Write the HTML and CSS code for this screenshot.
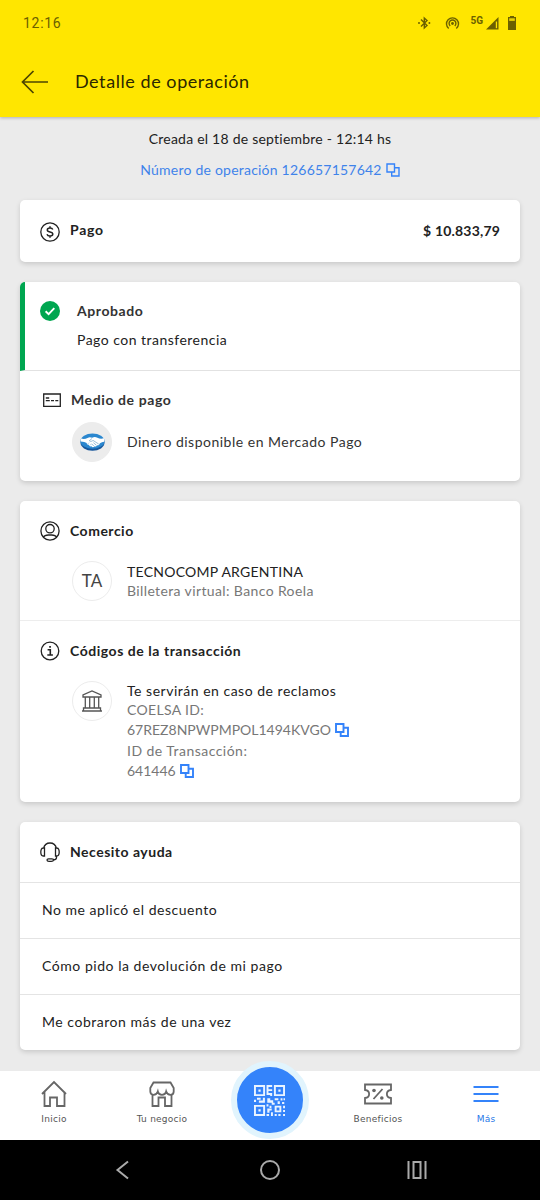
FILE: index.html
```html
<!DOCTYPE html>
<html lang="es">
<head>
<meta charset="utf-8">
<title>Detalle de operación</title>
<link rel="stylesheet" href="styles.css">
</head>
<body>
<svg class="defs" width="0" height="0">
  <symbol id="copy" viewBox="0 0 14 14"><path d="M1 1h7.500v8H1zM8.500 4.800H13V13H5.700V9"/></symbol>
</svg>
<header class="top">
  <div class="status">
    <span class="clock">12:16</span>
    <svg class="status-icons" width="104" height="20" viewBox="0 0 104 20">
      <g fill="none" stroke="#6b6000" stroke-width="1.400">
        <path d="M5 6.500l6 6L8.300 15V5L11 7.500l-6 6"/>
        <path d="M32.700 15.500a6 6 0 1 1 7.600 0M34.200 12.900a3.400 3.400 0 1 1 4.600 0"/>
      </g>
      <g fill="#6b6000">
        <circle cx="3" cy="10" r="1"/><circle cx="13.400" cy="10" r="1"/><circle cx="36.500" cy="10.500" r="1.400"/>
        <path d="M70 16.500L82.500 4v12.500z"/><path d="M79.800 8.500h1.300v6.700h-1.300z" fill="#ffe600"/>
        <path d="M92 4h2V3h4v1h2v13h-8z"/><path d="M93.200 5.300h5.600v2.600h-5.600z" fill="#ffe600" opacity=".85"/>
      </g>
      <text x="54.500" y="10.500" class="net">5G</text>
    </svg>
  </div>
  <div class="appbar">
    <svg width="28" height="24" viewBox="0 0 28 24" class="back"><path d="M27 12H2M12.500 1L1.500 12l11 11"/></svg>
    <h1>Detalle de operación</h1>
  </div>
</header>
<main>
  <p class="created">Creada el 18 de septiembre - 12:14 hs</p>
  <p class="number"><span>Número de operación 126657157642</span><svg class="copy thin"><use href="#copy"/></svg></p>

  <section class="card payment">
    <svg class="ico" viewBox="0 0 20 20"><circle cx="10" cy="10" r="9.200"/><path d="M12.800 7.500c-.4-1-1.400-1.500-2.800-1.500-1.600 0-2.700.7-2.700 1.900 0 2.700 5.500 1.300 5.500 4.100 0 1.300-1.100 2-2.800 2-1.600 0-2.700-.7-3-1.800M10 4.200V6M10 14v1.800" stroke-width="1.500"/></svg>
    <h2 class="pago">Pago</h2>
    <strong class="amount">$ 10.833,79</strong>
  </section>

  <section class="card">
    <div class="approved">
      <svg width="20" height="20" viewBox="0 0 20 20"><circle cx="10" cy="10" r="10" fill="#00a650"/><path d="M5.600 10.300l3 2.900 5.700-6" fill="none" stroke="#fff" stroke-width="1.900"/></svg>
      <div class="approved-text"><h2 class="aprobado">Aprobado</h2><p class="transfer">Pago con transferencia</p></div>
    </div>
    <div class="method">
      <div class="heading"><svg class="ico card-ico" viewBox="0 0 20 20"><path d="M1.700 4h16.600v12.300H1.700z"/><path d="M3.800 8h3.400M3.800 10.600h4M9 10.600h3M13.300 10.600h3" /></svg><h2 class="medio">Medio de pago</h2></div>
      <div class="item">
        <span class="avatar gray"><svg width="25" height="18" viewBox="0 0 25 18">
          <ellipse cx="12.500" cy="9.800" rx="12" ry="7.900" fill="#17569b"/><ellipse cx="12.500" cy="8.200" rx="12" ry="7.600" fill="#2b87cf"/>
          <path d="M1 5.500c2.500.8 4.500.5 6.500-.6 1.700-.9 3-.8 4.700-.1 1.800-1 3.300-1 5.200 0 2.100 1 4 1.200 6.600.5l.2 3.500c-2 .2-3.600 1-4.600 1.900-.3 1.500-1.500 1.900-2.500 1.600-.5 1.200-1.700 1.500-2.700 1.100-.9 1-2.200 1-3-.1-1.600.5-2.400-.5-2.700-1.500-1.400.2-2.100-.8-2-1.700C5.400 9.500 3.300 8.800.7 8.600z" fill="#fff"/>
          <path d="M12 5.500L9.300 7.700c1 1.100 2.700.7 3.700-.3l5.700 3.600M11.500 10.700l2.600 2.600M13.400 9.700l3 2.500M8 10.700l1-1M10 12.300l1-1" fill="none" stroke="#5792bd" stroke-width=".6"/>
        </svg></span>
        <p class="dinero">Dinero disponible en Mercado Pago</p>
      </div>
    </div>
  </section>

  <section class="card">
    <div class="merchant">
      <div class="heading"><svg class="ico" viewBox="0 0 20 20"><circle cx="10" cy="10" r="9.100"/><circle cx="10" cy="7.700" r="4.200"/><path d="M3.300 16.200c1.200-2 2.700-2.200 5-2.200h3.400c2.300 0 3.800.2 5 2.200"/></svg><h2 class="comercio">Comercio</h2></div>
      <div class="item"><span class="avatar">TA</span><div><p class="tecno">TECNOCOMP ARGENTINA</p><p class="sub billetera">Billetera virtual: Banco Roela</p></div></div>
    </div>
    <div class="codes">
      <div class="heading"><svg class="ico" viewBox="0 0 20 20"><circle cx="10" cy="10" r="8.800"/><path d="M7.600 8.700h2.700v5M7.300 14h5.600M9.200 5.900h1.700" stroke-width="1.600"/></svg><h2 class="codigos">Códigos de la transacción</h2></div>
      <div class="item top-item"><span class="avatar"><svg width="22" height="22" viewBox="0 0 22 22" class="bank"><path d="M2 7V5L11 1l9 4v2zM4.300 7v11M8.700 7v11M13.300 7v11M17.700 7v11M2.500 18h17v2.800h-17zM1 21h20"/></svg></span>
        <div><p class="serviran">Te servirán en caso de reclamos</p>
        <p class="sub coelsa">COELSA ID:</p>
        <p class="sub row"><span class="code">67REZ8NPWPMPOL1494KVGO</span><svg class="copy"><use href="#copy"/></svg></p>
        <p class="sub idt">ID de Transacción:</p>
        <p class="sub row"><span class="num">641446</span><svg class="copy"><use href="#copy"/></svg></p></div>
      </div>
    </div>
  </section>

  <section class="card help">
    <div class="heading"><svg class="ico" viewBox="0 0 20 20"><path d="M3.500 6.500C4.500 2.500 6.700 1 10 1s5.500 1.500 6.500 5.500M4.500 6v8H3.300C1.700 14 .8 12.500.8 10s.9-4 2.500-4zM15.500 6v8h1.200c1.600 0 2.500-1.500 2.500-4s-.9-4-2.500-4zM16.500 14v1.500c0 1.500-1.200 2.300-3 2.500M8.500 16.800h3.300c1.500 0 2 .6 1.800 1.300-.2.800-1 1.200-2.300 1.200H9c-1.400 0-2-.5-2-1.200s.5-1.300 1.500-1.300z"/></svg><h2 class="necesito">Necesito ayuda</h2></div>
    <p class="link l1">No me aplicó el descuento</p>
    <p class="link l2">Cómo pido la devolución de mi pago</p>
    <p class="link l3">Me cobraron más de una vez</p>
  </section>
</main>
<nav class="tabs">
  <a class="tab"><svg width="28" height="28" viewBox="0 0 28 28"><path d="M2 14L14 2l12 12M4.500 11.800V26H10v-8.500h7V26h7.500V11.800"/></svg><span>Inicio</span></a>
  <a class="tab"><svg width="28" height="28" viewBox="0 0 28 28"><path d="M5.500 2.500h17L25.700 8v3.500c0 4.500-6 4.500-7.500 0-1 4.500-7.400 4.500-8.400 0-1.500 4.500-7.500 4.500-7.500 0V8zM4.500 14.500V26h6v-8.500h6.500V26h6.500V14.500"/></svg><span>Tu negocio</span></a>
  <div class="scan"><span class="scan-btn"><svg width="31" height="31" viewBox="0 0 21 21" fill="#eaf4ff">
    <path fill-rule="evenodd" d="M0 0h7.500v7.500H0zM1.300 1.300v4.900h4.900V1.300zM13.500 0H21v7.500h-7.500zM14.800 1.300v4.900h4.900V1.300zM0 13.500h7.500V21H0zM1.300 14.800v4.900h4.900v-4.900zM14 14h4.500v4.500H14zM15.300 15.300v1.900h1.900v-1.900z"/>
    <path d="M3 3h1.500v1.500H3zM16.500 3H18v1.500h-1.500zM3 16.500h1.500V18H3zM8.500 0h3.800v1.300H9.800v1.500h2.500v1.300H9.800v1.400h2.500v2H11V6.800H8.500zM0 10h1.400v1.500H0zM2 8.700h2.500V10H2zM3.300 10.500H6V8.700h1.400V12H3.300zM9 9h2v1.300h2V12H9zM14 9h2.500v1.300H14zM18 9h1.300v1.500H18zM20 9h1v1.300h-1zM12 12h2v1.300h-2zM16 11h1.500v1.800H16zM19 11.500h1.500v1.300H19zM8.500 13h1.300v1.500H8.500zM10.500 14h1.300v1.500h-1.300zM9 16h3v1.300h-1.500v1.500H9zM11.500 18.500h1.300V21h-1.300zM8.500 19.700h1.700V21H8.500zM19.700 14H21v1.800h-1.300zM19.700 17H21v1.300h-1.300zM14 19.700h1.400V21H14zM16.500 19.700H18V21h-1.500zM19.700 19.700H21V21h-1.300z"/>
  </svg></span></div>
  <a class="tab"><svg width="30" height="28" viewBox="0 0 30 28"><path d="M2 4.500h26V10c-5.500.5-5.500 7.500 0 8v5.500H2V18c5.500-.5 5.500-7.500 0-8zM10.500 19l9-10"/><circle cx="11" cy="10.500" r="1.800" fill="#666" stroke="none"/><circle cx="18.800" cy="18" r="1.800" fill="#666" stroke="none"/></svg><span>Beneficios</span></a>
  <a class="tab active"><svg width="26" height="28" viewBox="0 0 26 28"><path d="M.5 7h25M.5 14h25M.5 21h25"/></svg><span>Más</span></a>
</nav>
<footer class="android">
  <svg width="20" height="20" viewBox="0 0 20 20"><path d="M15 1.500L4.500 10 15 18.500" /></svg>
  <svg width="20" height="20" viewBox="0 0 20 20"><circle cx="10" cy="10" r="9"/></svg>
  <svg width="20" height="20" viewBox="0 0 20 20"><path d="M1.500 1v18M6.500 2h7v16h-7zM18.500 1v18"/></svg>
</footer>
</body>
</html>
```
FILE: styles.css
```css
* { box-sizing: border-box; margin: 0; padding: 0; }
body { width: 540px; height: 1200px; overflow: hidden; display: flex; flex-direction: column; background: #ebebeb; color: #222; font: 14px/20px Lato, "Open Sans", sans-serif; letter-spacing: .3px; white-space: nowrap; }
h2 { font-size: 14px; line-height: 20px; font-weight: 700; }
svg { flex: none; display: block; }
.defs { position: absolute; }
.top { height: 117px; background: #ffe600; box-shadow: 0 1px 3px rgba(0,0,0,.25); }
.status { height: 46px; padding: 0 20px 0 23px; display: flex; align-items: center; justify-content: space-between; color: #6b6000; }
.clock { font: 400 14px Roboto, sans-serif; letter-spacing: .7px; }
.status-icons { overflow: visible; }
.net { font: 700 10px Roboto, sans-serif; fill: #6b6000; letter-spacing: 0; }
.appbar { height: 71px; padding: 0 0 2px 21px; display: flex; align-items: center; gap: 26px; }
.back { fill: none; stroke: #4d4500; stroke-width: 1.7; margin-top: 2px; }
h1 { font-size: 18px; line-height: 24px; font-weight: 400; color: #2b2700; letter-spacing: .56px; }
main { height: 954px; padding: 12px 20px 0; }
.created { text-align: center; letter-spacing: .23px; }
.number { display: flex; justify-content: center; gap: 4px; align-items: center; height: 20px; margin: 11px 0 20px; color: #3f83ea; letter-spacing: .22px; }
.copy { width: 14px; height: 14px; fill: none; stroke: #3483fa; stroke-width: 1.9; }
.thin { stroke-width: 1.4; }
.card { background: #fff; border-radius: 5px; box-shadow: 0 2px 5px rgba(0,0,0,.15); margin-bottom: 20px; overflow: hidden; }
.ico { width: 20px; height: 20px; fill: none; stroke: #222; stroke-width: 1.3; }
.payment { height: 62px; display: flex; align-items: center; padding: 0 20px; gap: 10px; }
.payment .ico { margin-top: 1px; }
.pago { margin-top: -3px; letter-spacing: .7px; }
.amount { margin-left: auto; letter-spacing: .18px; }
.approved { height: 89px; display: flex; gap: 17px; padding: 19px 15px; border-left: 5px solid #00a650; border-bottom: 1px solid #e2e2e2; }
.approved h2 { color: #333; letter-spacing: .57px; }
.transfer { margin-top: 9px; letter-spacing: .48px; }
.method { height: 110px; padding: 20px; }
.heading { display: flex; align-items: center; gap: 10px; height: 20px; }
.method .heading { padding-left: 2px; gap: 9px; margin-top: -1px; }
.card-ico { margin-left: -.5px; margin-right: .5px; }
.medio { letter-spacing: .6px; color: #333; }
.item { display: flex; align-items: center; gap: 15px; padding-left: 32px; }
.method .item { margin-top: 12px; }
.dinero { letter-spacing: .5px; color: #333; margin-top: -2px; }
.avatar { flex: none; width: 40px; height: 40px; border: 1px solid #ececec; border-radius: 50%; display: flex; align-items: center; justify-content: center; color: #444; font-size: 17px; letter-spacing: 0; }
.gray { background: #ececec; }
.merchant { height: 120px; padding: 20px 20px 0; border-bottom: 1px solid #ededed; }
.comercio { letter-spacing: .5px; }
.merchant .item { margin-top: 20px; }
.item p { line-height: 19px; }
.tecno { letter-spacing: .25px; }
.sub { color: #777; }
.billetera { letter-spacing: .38px; }
.codes { height: 181px; padding: 20px 20px 0; }
.codigos { letter-spacing: .54px; }
.serviran { letter-spacing: .51px; }
.coelsa { letter-spacing: .33px; }
.code, .num { letter-spacing: 0; }
.idt { letter-spacing: .47px; }
.top-item { align-items: flex-start; margin-top: 20px; }
.top-item p.row { display: flex; align-items: center; gap: 4px; line-height: 22px; height: 22px; }
.bank { fill: none; stroke: #555; stroke-width: 1.3; }
.help { height: 228px; }
.help .heading { height: 60px; padding-left: 20px; }
.necesito { letter-spacing: .5px; }
.link { height: 56px; line-height: 53px; padding-left: 22px; border-top: 1px solid #e4e4e4; }
.l1 { letter-spacing: .52px; }
.l2 { letter-spacing: .54px; }
.l3 { letter-spacing: .53px; }
.tabs { height: 69px; background: #fff; display: grid; grid-template-columns: repeat(5, 108px); }
.tab { display: flex; flex-direction: column; align-items: center; padding-top: 9px; gap: 4px; color: #555; font: 9px/14px "DejaVu Sans", sans-serif; letter-spacing: .25px; }
.tab svg { fill: none; stroke: #666; stroke-width: 1.8; margin-left: -1px; }
.tab.active { color: #2878e8; }
.tab.active svg { stroke: #3483fa; }
.scan { display: flex; justify-content: center; }
.scan-btn { flex: none; width: 78px; height: 78px; margin-top: -10px; margin-left: -1px; border: 6px solid #e1f4fd; border-radius: 50%; background: #3483fa; display: flex; align-items: center; justify-content: center; }
.android { height: 60px; background: #000; display: flex; align-items: center; justify-content: center; gap: 127px; padding-right: 1px; }
.android svg { fill: none; stroke: #aaa; stroke-width: 2; }
```
